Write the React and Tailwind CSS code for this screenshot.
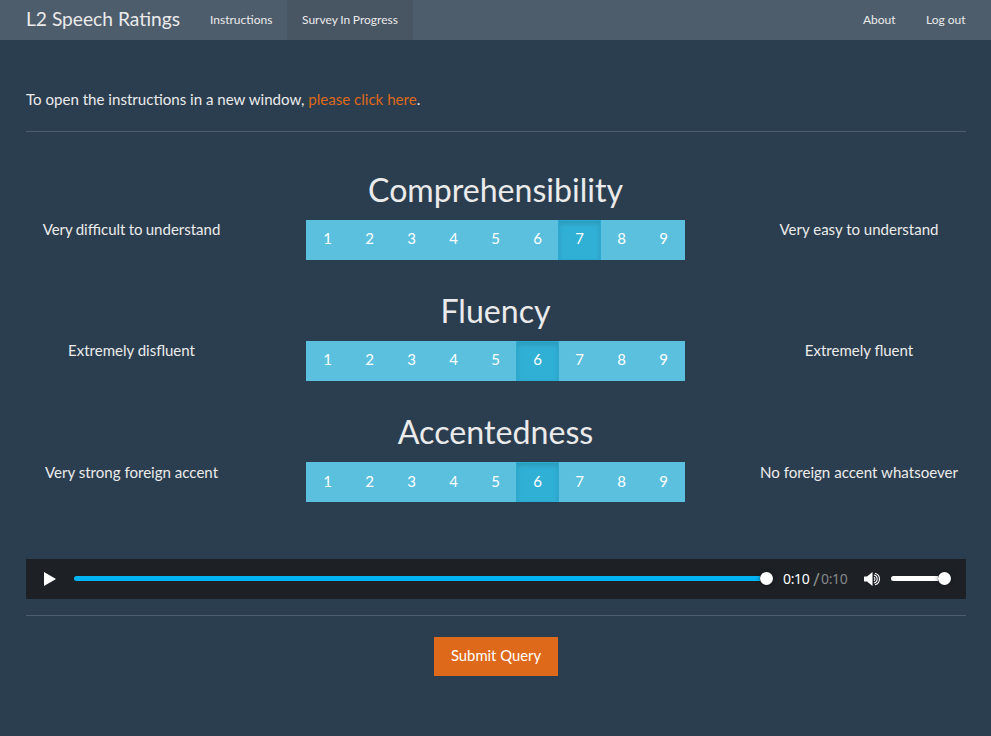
const scales = [
  {
    title: "Comprehensibility", left: "Very difficult to understand", right: "Very easy to understand", selected: 7,
    titleStyle: "text-[32.1px]", leftStyle: "pt-[47px] pl-[1px] [word-spacing:-0.6px]", rightStyle: "pt-[47px] pr-[3px]", digit: "pb-[3px]",
  },
  {
    title: "Fluency", left: "Extremely disfluent", right: "Extremely fluent", selected: 6,
    titleStyle: "text-[32.1px]", leftStyle: "pt-[47px] pl-[1px]", rightStyle: "pt-[47px] pr-[3px]", digit: "pb-[3px]",
  },
  {
    title: "Accentedness", left: "Very strong foreign accent", right: "No foreign accent whatsoever", selected: 6,
    titleStyle: "text-[32.2px]", leftStyle: "pt-[48px] pl-[1px] text-[15.07px]", rightStyle: "pt-[48px] pr-[3px] text-[15.1px]", digit: "pb-[1px]",
  },
];

function Scale({ title, left, right, selected, titleStyle, leftStyle, rightStyle, digit }) {
  return (
    <section className="grid h-[121px] grid-cols-[210px_519px_211px] text-center">
      <p className={`leading-[21px] ${leftStyle}`}>{left}</p>
      <div>
        <h2 className={`leading-[35px] ${titleStyle}`}>{title}</h2>
        <div className="mx-auto mt-[13px] flex w-[379px] bg-[#5bc0de] text-white">
          {[1, 2, 3, 4, 5, 6, 7, 8, 9].map((n) => (
            <button
              key={n}
              className={`h-[40px] shrink-0 ${digit} ${
                n === selected
                  ? "-mr-px w-[43px] border border-[#2aabd2] bg-[#31b0d5] shadow-[inset_0_3px_5px_rgba(0,0,0,0.125)]"
                  : "w-[42px] pl-px"
              }`}
            >
              {n}
            </button>
          ))}
        </div>
      </div>
      <p className={`leading-[21px] ${rightStyle}`}>{right}</p>
    </section>
  );
}

function Player() {
  return (
    <div className="mt-[24px] flex h-[40px] items-center bg-[#1d2025] pl-[18px]">
      <svg width="12" height="14" viewBox="0 0 12 14" fill="#fff"><path d="M0 0L12 7L0 14Z" /></svg>
      <div className="mb-px ml-[18px] h-[5px] w-[686px] rounded-l-full bg-[#00b3f4]" />
      <div className="mb-px size-[13px] rounded-full bg-white shadow-[0_0_4px_rgba(0,0,0,0.5)]" />
      <div className="ml-[10px] flex w-[81px] font-['Noto_Sans',sans-serif] text-[14px] leading-[20px] tracking-[-0.35px]">
        <span className="w-[30px] text-white">0:10</span>
        <span className="w-[8px] text-[18px] text-[#86888a]">/</span>
        <span className="text-[#86888a]">0:10</span>
      </div>
      <svg width="17" height="14" viewBox="0 0 17 14" fill="none">
        <path d="M0 5Q0 4.5 .5 4.5H3L8.5 0V14L3 9.5H.5Q0 9.5 0 9Z" fill="#fff" />
        <path d="M10 5.3A2 2 0 0 1 10 8.7M10 3A4.1 4.1 0 0 1 10 11M11 1.2A6 6 0 0 1 11 12.8" stroke="#fff" strokeWidth="1.1" />
      </svg>
      <div className="mb-px ml-[10px] h-[5px] w-[47px] rounded-l-full bg-white" />
      <div className="mb-px size-[13px] rounded-full bg-white shadow-[0_0_4px_rgba(0,0,0,0.5)]" />
    </div>
  );
}

export default function App() {
  return (
    <div className="h-[736px] overflow-hidden bg-[#2b3e50] font-['Lato',sans-serif] text-[15px] text-[#ebebeb]">
      <nav className="flex h-[40px] bg-[#4e5d6c] pr-[10px] pl-[26px] text-[12px] leading-[40px]">
        <a className="mr-[14px] w-[155px] text-[19.2px] leading-[38px] whitespace-nowrap">L2 Speech Ratings</a>
        <a className="w-[92px] px-[15px]">Instructions</a>
        <a className="w-[126px] bg-[#485563] pl-[15px] whitespace-nowrap [word-spacing:-0.4px]">Survey In Progress</a>
        <a className="ml-auto w-[63px] pl-[15px]">About</a>
        <a className="w-[70px] pl-[15px] whitespace-nowrap">Log out</a>
      </nav>
      <main className="pr-[25px] pl-[26px]">
        <p className="pt-[49px] text-[15.08px] leading-[21px]">
          To open the instructions in a new window, <a className="text-[#df691a]">please click here</a>.
        </p>
        <hr className="mt-[21px] border-[#4e5d6c]" />
        <div className="pt-[40px]">
          {scales.map((scale) => <Scale key={scale.title} {...scale} />)}
        </div>
        <Player />
        <hr className="mt-[16px] border-[#4e5d6c]" />
        <button className="mx-auto mt-[21px] block h-[39px] w-[124px] bg-[#df691a] pb-[2px] text-[14.8px] text-white">Submit Query</button>
      </main>
    </div>
  );
}
